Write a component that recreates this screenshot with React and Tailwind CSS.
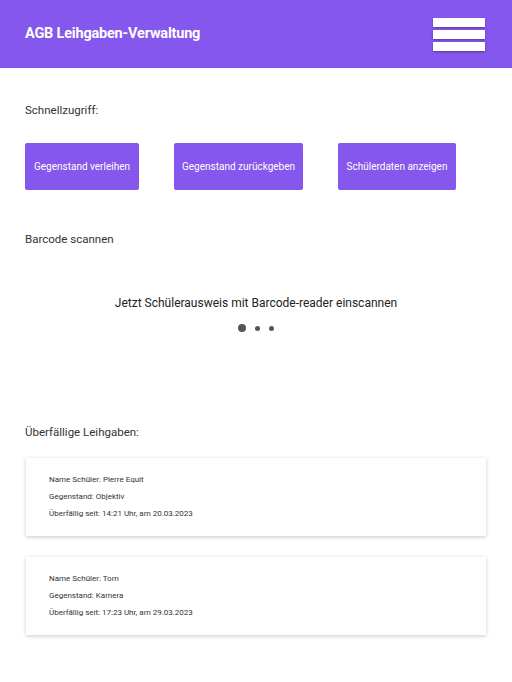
export default function App() {
  const cards = [
    { name: "Pierre Equit", item: "Objektiv", since: "14:21 Uhr, am 20.03.2023" },
    { name: "Tom", item: "Kamera", since: "17:23 Uhr, am 29.03.2023" },
  ];
  return (
    <div className="min-h-[682px] bg-white text-[#333]" style={{ fontFamily: "Roboto, 'Liberation Sans', sans-serif" }}>
      <header className="h-[68px] bg-[#8557ec] flex items-center justify-between pl-[25px] pr-[27px]">
        <h1 className="text-white text-[14.5px] font-bold tracking-[-0.2px]">AGB Leihgaben-Verwaltung</h1>
        <div className="flex flex-col gap-[3px]">
          <div className="w-[52px] h-[9px] bg-white shadow-[0_1px_2px_rgba(0,0,0,0.35)]" />
          <div className="w-[52px] h-[9px] bg-white shadow-[0_1px_2px_rgba(0,0,0,0.35)]" />
          <div className="w-[52px] h-[9px] bg-white shadow-[0_1px_2px_rgba(0,0,0,0.35)]" />
        </div>
      </header>
      <main className="px-[25px]">
        <p className="pt-[34px] text-[11.5px] leading-[16px]">Schnellzugriff:</p>
        <div className="mt-[25px] flex gap-[35px]">
          <button className="h-[47px] w-[114px] rounded-[2px] bg-[#8557ec] text-white text-[10px]">Gegenstand verleihen</button>
          <button className="h-[47px] w-[129px] rounded-[2px] bg-[#8557ec] text-white text-[10px]">Gegenstand zurückgeben</button>
          <button className="h-[47px] w-[118px] rounded-[2px] bg-[#8557ec] text-white text-[10px]">Schülerdaten anzeigen</button>
        </div>
        <p className="mt-[41px] text-[11.5px] leading-[16px]">Barcode scannen</p>
        <p className="mt-[48px] text-center text-[12px] leading-[16px] text-[#222]">Jetzt Schülerausweis mit Barcode-reader einscannen</p>
        <div className="mt-[13px] flex items-center justify-center gap-[9px]">
          <span className="w-[8px] h-[8px] rounded-full bg-[#555]" />
          <span className="w-[5px] h-[5px] rounded-full bg-[#555]" />
          <span className="w-[5px] h-[5px] rounded-full bg-[#555]" />
        </div>
        <p className="mt-[92px] text-[11.5px] leading-[16px]">Überfällige Leihgaben:</p>
        <div className="mt-[18px] flex flex-col gap-[21px] pr-[1px]">
          {cards.map((c, i) => (
            <div key={i} className="ml-[1px] h-[78px] bg-white shadow-[0_1px_4px_rgba(0,0,0,0.22)] pl-[23px] pt-[13px] flex flex-col text-[8px] leading-[17px] text-[#333]">
              <span>Name Schüler: {c.name}</span>
              <span>Gegenstand: {c.item}</span>
              <span>Überfällig seit: {c.since}</span>
            </div>
          ))}
        </div>
      </main>
    </div>
  );
}
